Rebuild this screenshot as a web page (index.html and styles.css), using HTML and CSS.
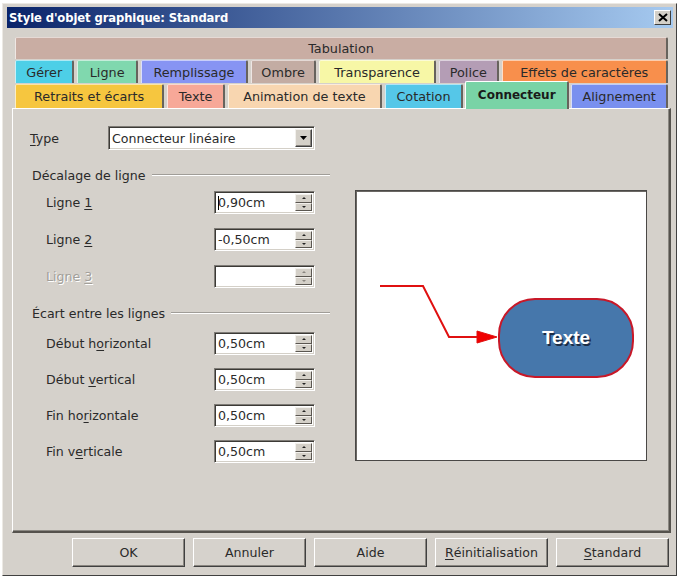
FILE: index.html
```html
<!DOCTYPE html>
<html lang="fr">
<head>
<meta charset="utf-8">
<title>Style d'objet graphique: Standard</title>
<link rel="stylesheet" href="styles.css">
</head>
<body>
<div class="dialog">
  <div class="titlebar">
    <span class="title">Style d'objet graphique: Standard</span>
    <span class="close"><svg width="10" height="9" viewBox="0 0 10 9"><path d="M1 1 L9 8 M9 1 L1 8" stroke="#000" stroke-width="2"/></svg></span>
  </div>
  <div class="body">
    <div class="tabs">
      <div class="tabrow row1">
        <div class="tab t-tabul">Tabulation</div>
      </div>
      <div class="tabrow row2">
        <div class="tab t-gerer">Gérer</div>
        <div class="tab t-ligne">Ligne</div>
        <div class="tab t-rempl">Remplissage</div>
        <div class="tab t-ombre">Ombre</div>
        <div class="tab t-transp">Transparence</div>
        <div class="tab t-police">Police</div>
        <div class="tab t-effets">Effets de caractères</div>
      </div>
      <div class="tabrow row3">
        <div class="tab t-retraits">Retraits et écarts</div>
        <div class="tab t-texte">Texte</div>
        <div class="tab t-anim">Animation de texte</div>
        <div class="tab t-cotation">Cotation</div>
        <div class="tab t-connect selected">Connecteur</div>
        <div class="tab t-align">Alignement</div>
      </div>
    </div>
    <div class="panel">
      <div class="form">
        <div class="type-row">
          <span class="type-label"><u>T</u>ype</span>
          <div class="select">
            <span class="select-value">Connecteur linéaire</span>
            <span class="drop-btn"><svg width="8" height="5" viewBox="0 0 8 5"><path d="M0 0 H7 L3.5 4 Z" fill="#000"/></svg></span>
          </div>
        </div>

        <div class="heading first"><span>Décalage de ligne</span><span class="rule"></span></div>
        <div class="rows rows-a">
          <div class="row">
            <span class="lbl">Ligne <u>1</u></span>
            <div class="spin"><span class="val"><span class="caret"></span>0,90cm</span><span class="spin-btns"><span class="sb up"></span><span class="sb down"></span></span></div>
          </div>
          <div class="row">
            <span class="lbl">Ligne <u>2</u></span>
            <div class="spin"><span class="val">-0,50cm</span><span class="spin-btns"><span class="sb up"></span><span class="sb down"></span></span></div>
          </div>
          <div class="row">
            <span class="lbl disabled">Ligne <u>3</u></span>
            <div class="spin off"><span class="val"></span><span class="spin-btns"><span class="sb up"></span><span class="sb down"></span></span></div>
          </div>
        </div>

        <div class="heading second"><span>Écart entre les lignes</span><span class="rule"></span></div>
        <div class="rows rows-b">
          <div class="row">
            <span class="lbl">Début h<u>o</u>rizontal</span>
            <div class="spin"><span class="val">0,50cm</span><span class="spin-btns"><span class="sb up"></span><span class="sb down"></span></span></div>
          </div>
          <div class="row">
            <span class="lbl">Début <u>v</u>ertical</span>
            <div class="spin"><span class="val">0,50cm</span><span class="spin-btns"><span class="sb up"></span><span class="sb down"></span></span></div>
          </div>
          <div class="row">
            <span class="lbl">Fin ho<u>r</u>izontale</span>
            <div class="spin"><span class="val">0,50cm</span><span class="spin-btns"><span class="sb up"></span><span class="sb down"></span></span></div>
          </div>
          <div class="row">
            <span class="lbl">Fin v<u>e</u>rticale</span>
            <div class="spin"><span class="val">0,50cm</span><span class="spin-btns"><span class="sb up"></span><span class="sb down"></span></span></div>
          </div>
        </div>
      </div>
      <div class="preview">
        <svg width="290" height="269" viewBox="0 0 290 269">
          <polyline points="24,95 67,95 93,146 123,146" fill="none" stroke="#e01010" stroke-width="2"/>
          <path d="M121 140 L141 146 L121 152 Z" fill="#f00000" stroke="#e01010" stroke-width="1"/>
          <rect x="143" y="108" width="134" height="78" rx="36" ry="36" fill="#4677ab" stroke="#c81828" stroke-width="2"/>
          <text x="211.5" y="154.5" text-anchor="middle" class="shape-shadow">Texte</text>
          <text x="210" y="153" text-anchor="middle" class="shape-text">Texte</text>
        </svg>
      </div>
    </div>
    <div class="buttons">
      <div class="btn">OK</div>
      <div class="btn">Annuler</div>
      <div class="btn">Aide</div>
      <div class="btn"><u>R</u>éinitialisation</div>
      <div class="btn"><u>S</u>tandard</div>
    </div>
  </div>
</div>
</body>
</html>
```

FILE: styles.css
```css
* { box-sizing: border-box; }
html, body { margin: 0; padding: 0; background: #ffffff; }
body {
  font-family: "DejaVu Sans", Verdana, sans-serif;
  font-size: 12.6px;
  color: #2a2a2a;
}
u { text-decoration: underline; text-underline-offset: 2px; }

.dialog {
  margin: 3px 0 0 2px;
  width: 675px;
  height: 573px;
  background: #d5d1cb;
  border: 1px solid;
  border-color: #ece9e4 #404040 #404040 #ece9e4;
  padding: 3px 3px 0 4px;
  display: flex;
  flex-direction: column;
}

.titlebar {
  height: 21px;
  background: linear-gradient(to right, #0a246a, #a6caf0);
  display: flex;
  align-items: center;
  justify-content: space-between;
  padding: 0 2px 0 2px;
}
.title {
  color: #ffffff;
  font-weight: bold;
  font-size: 11.6px;
  letter-spacing: -0.1px;
}
.close {
  width: 17px;
  height: 15px;
  background: #d4d0c8;
  border: 1px solid;
  border-color: #ffffff #404040 #404040 #ffffff;
  display: flex;
  align-items: center;
  justify-content: center;
}

.body {
  padding: 9px 2px 0 5px;
  display: flex;
  flex-direction: column;
}

.tabs {
  margin: 0 3px;
  display: flex;
  flex-direction: column;
}
.tabrow {
  display: flex;
  gap: 3px;
  align-items: flex-end;
}
.row1 { height: 22px; margin-bottom: 1px; }
.row2 { height: 23px; }
.row3 { height: 25px; position: relative; z-index: 2; }

.tab {
  flex-basis: 0;
  flex-shrink: 1;
  height: 100%;
  display: flex;
  align-items: center;
  justify-content: center;
  white-space: nowrap;
  font-size: 12.8px;
  border-left: 1px solid rgba(255,255,255,0.7);
  border-top: 1px solid rgba(255,255,255,0.55);
  border-right: 2px solid #67635d;
  border-radius: 2px 2px 0 0;
  color: #2a2a2a;
}
.row3 .tab { height: 24px; }
.row3 .tab.selected {
  height: 28px;
  margin: 0 -1px -1px -1px;
  font-weight: bold;
  font-size: 12px;
  color: #1a1a1a;
  padding-bottom: 2px;
  border-top-color: #ffffff;
  border-left-color: #ffffff;
}

.t-tabul { flex-grow: 1; background: #c9ada3; }
.t-gerer { flex-grow: 58; background: #4dcfe7; }
.t-ligne { flex-grow: 59; background: #80d8ae; }
.t-rempl { flex-grow: 107; background: #8794f3; }
.t-ombre { flex-grow: 64; background: #c3aca3; }
.t-transp { flex-grow: 117; background: #f7f7a6; }
.t-police { flex-grow: 58; background: #b49db5; }
.t-effets { flex-grow: 168; background: #f88f4c; }
.t-retraits { flex-grow: 150; background: #f6c63f; }
.t-texte { flex-grow: 56; background: #f7a898; }
.t-anim { flex-grow: 155; background: #f8d6b0; }
.t-cotation { flex-grow: 77; background: #55c7e8; }
.t-connect { flex-grow: 104; background: #79d3a6; }
.t-align { flex-grow: 96; background: #7990ef; }

.panel {
  height: 425px;
  border-left: 1px solid #ffffff;
  border-top: 1px solid #ffffff;
  border-right: 2px solid;
  border-bottom: 2px solid;
  border-right-color: #55524d;
  border-bottom-color: #55524d;
  box-shadow: inset -1px -1px 0 #8c8983;
  display: flex;
  align-items: flex-start;
}

.form {
  width: 317px;
  padding: 17px 0 0 17px;
}

.type-row {
  height: 24px;
  display: flex;
  align-items: center;
}
.type-label { width: 78px; }

.select, .spin {
  background: #ffffff;
  border: 1px solid;
  border-color: #7e7b76 #ffffff #ffffff #7e7b76;
  box-shadow: inset 1px 1px 0 #3c3a36, inset -1px -1px 0 #d4d0c8;
  display: flex;
  align-items: stretch;
}
.select { width: 207px; height: 24px; }
.select-value {
  flex: 1;
  display: flex;
  align-items: center;
  padding-left: 3px;
}
.drop-btn {
  width: 17px;
  margin: 2px 2px 2px 0;
  background: #d4d0c8;
  border: 1px solid;
  border-color: #f2f0ec #404040 #404040 #f2f0ec;
  box-shadow: inset -1px -1px 0 #8a8680;
  display: flex;
  align-items: center;
  justify-content: center;
}

.heading {
  height: 16px;
  display: flex;
  align-items: center;
  padding-left: 2px;
}
.heading.first { margin-top: 17px; }
.heading.second { margin-top: 17px; }
.rule {
  flex: 1;
  margin-left: 6px;
  height: 2px;
  border-top: 1px solid #a09d98;
  border-bottom: 1px solid #ffffff;
}

.rows {
  padding-left: 16px;
  display: flex;
  flex-direction: column;
}
.rows-a { margin-top: 8px; gap: 14px; }
.rows-b { margin-top: 11px; gap: 13px; }
.row {
  height: 23px;
  display: flex;
  align-items: center;
}
.lbl { width: 168px; }
.lbl.disabled {
  color: #a29f9a;
  text-shadow: 1px 1px 0 #ffffff;
}

.spin { width: 101px; height: 23px; }
.val {
  flex: 1;
  display: flex;
  align-items: center;
  padding-left: 3px;
}
.caret {
  display: inline-block;
  width: 1px;
  height: 14px;
  background: #000;
  margin-right: -1px;
}
.spin-btns {
  width: 17px;
  margin: 2px 2px 2px 0;
  display: flex;
  flex-direction: column;
}
.sb {
  flex: 1;
  background: #d4d0c8;
  border: 1px solid;
  border-color: #f2f0ec #5a5650 #5a5650 #f2f0ec;
  display: flex;
  align-items: center;
  justify-content: center;
}
.sb::after {
  content: "";
  width: 0;
  height: 0;
  border-left: 2px solid transparent;
  border-right: 2px solid transparent;
}
.sb.up::after { border-bottom: 2px solid #222; }
.sb.down::after { border-top: 2px solid #222; }
.spin.off .sb.up::after { border-bottom-color: #8a8680; }
.spin.off .sb.down::after { border-top-color: #8a8680; }

.preview {
  margin: 81px 0 0 25px;
  width: 292px;
  height: 271px;
  background: #ffffff;
  border: 1px solid #4a4846;
  box-shadow: inset 1px 1px 0 #6b6864;
}
.preview svg { display: block; }
.shape-text {
  font-family: "Liberation Sans", Arial, sans-serif;
  font-weight: bold;
  font-size: 19px;
  fill: #ffffff;
}
.shape-shadow {
  font-family: "Liberation Sans", Arial, sans-serif;
  font-weight: bold;
  font-size: 19px;
  fill: #1c2c44;
}

.buttons {
  margin-top: 5px;
  display: flex;
  justify-content: flex-end;
  gap: 8px;
  padding-right: 2px;
}
.btn {
  width: 113px;
  height: 29px;
  display: flex;
  align-items: center;
  justify-content: center;
  background: #d6d2cc;
  border: 1px solid;
  border-color: #ffffff #404040 #404040 #ffffff;
  box-shadow: inset -1px -1px 0 #8a8680;
  color: #2a2a2a;
}
```
